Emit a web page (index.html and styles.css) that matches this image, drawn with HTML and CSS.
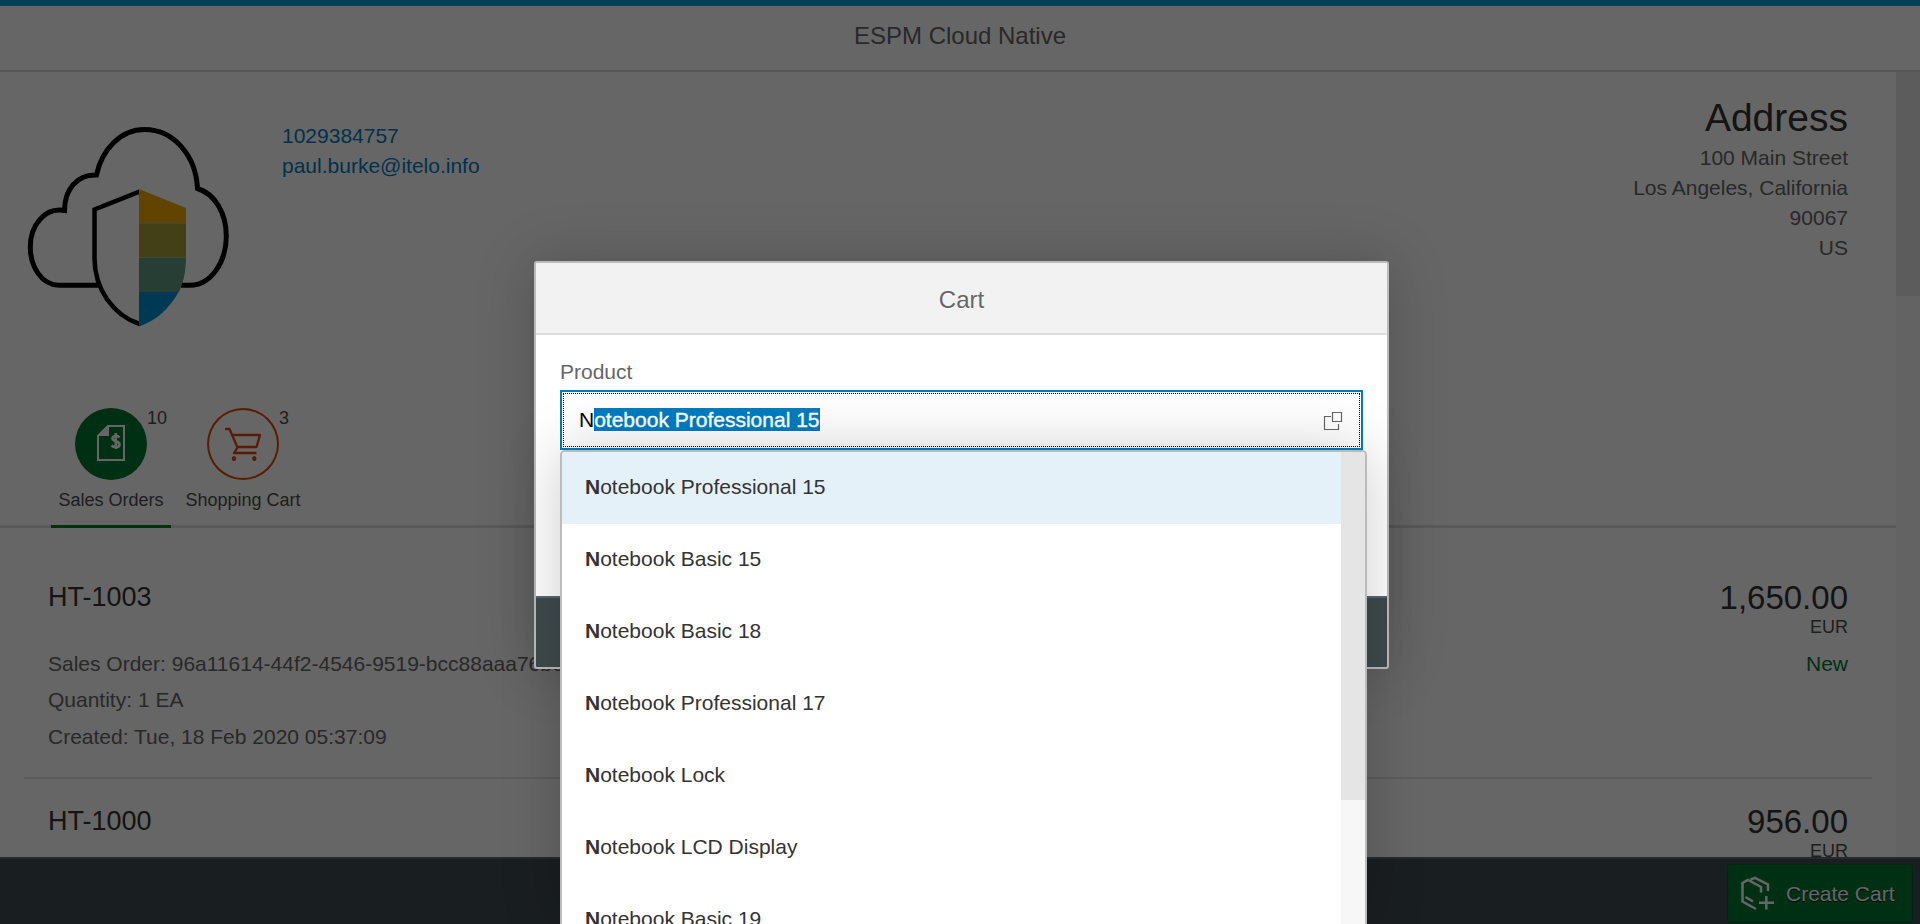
FILE: index.html
```html
<!DOCTYPE html>
<html lang="en">
<head>
<meta charset="utf-8">
<title>ESPM Cloud Native</title>
<link rel="stylesheet" href="styles.css">
</head>
<body>
<div class="app">
  <header class="shell-header"><h1 class="shell-title">ESPM Cloud Native</h1></header>
  <main class="content">
    <div class="page">
      <section class="profile">
        <svg class="logo" width="208" height="210" viewBox="24 128 208 210">
          <path d="M99 285.200H59C42 285.200 30.300 267 30.300 247C30.300 226 44 207 64.500 210.500C64.500 190 77 174 96.500 175C102 149 121 129.500 144.500 129.500C174 129.500 196 156 197.500 188.500C215 194 226.300 213 226.300 236C226.300 262 211 285.200 190 285.200H181" fill="none" stroke="#000" stroke-width="5"/>
          <path d="M139.500 191.700L94.500 209.500V258C94.500 289 113 315 139.500 324" fill="none" stroke="#000" stroke-width="4.500"/>
          <path d="M139 189L186 208V223.300H139Z" fill="#f0ab00"/>
          <path d="M139 223.300H186V257.500H139Z" fill="#a9a13b"/>
          <path d="M139 257.500H186C186 271 183.500 282 179 292H139Z" fill="#5f9c80"/>
          <path d="M139 292H178.500C170 308 156 321 139 326.500Z" fill="#008fd3"/>
        </svg>
        <div class="contact"><a>1029384757</a><a>paul.burke@itelo.info</a></div>
        <div class="address">
          <h2>Address</h2>
          <span>100 Main Street</span><span>Los Angeles, California</span><span>90067</span><span>US</span>
        </div>
      </section>
      <nav class="tabs">
        <div class="tab selected">
          <div class="tab-icon orders">
            <svg width="72" height="72" viewBox="0 0 72 72"><path d="M23 28L33 18H49V52H23Z" fill="none" stroke="#fff" stroke-width="2"/><path d="M22 28L33 17H34V28Z" fill="#fff"/><path d="M44.500 29.500C42.500 27 37.500 27.500 37.500 30.500C37.500 34 44.500 32.500 44.500 36.500C44.500 40 39 40 36.500 37.500M40.800 25V41" fill="none" stroke="#fff" stroke-width="2.600"/></svg>
            <span class="count">10</span>
          </div>
          <span class="tab-label">Sales Orders</span>
        </div>
        <div class="tab">
          <div class="tab-icon cart">
            <svg width="72" height="72" viewBox="0 0 72 72"><path d="M18 21H22.500L30.500 39.500L27 45H49.500M24.500 27H53L49.500 39H30.500" fill="none" stroke="#e04600" stroke-width="2.300" stroke-linejoin="round"/><ellipse cx="27" cy="50.500" rx="2.200" ry="2.600" fill="#e04600"/><ellipse cx="47.300" cy="50.500" rx="2.200" ry="2.600" fill="#e04600"/></svg>
            <span class="count">3</span>
          </div>
          <span class="tab-label">Shopping Cart</span>
        </div>
      </nav>
      <section class="orders-list">
        <article class="order">
          <div class="order-info"><h3>HT-1003</h3><p>Sales Order: 96a11614-44f2-4546-9519-bcc88aaa76be</p><p>Quantity: 1 EA</p><p>Created: Tue, 18 Feb 2020 05:37:09</p></div>
          <div class="order-price"><strong>1,650.00</strong><span class="currency">EUR</span><span class="status">New</span></div>
        </article>
        <article class="order">
          <div class="order-info"><h3>HT-1000</h3></div>
          <div class="order-price"><strong>956.00</strong><span class="currency">EUR</span></div>
        </article>
      </section>
    </div>
    <div class="scrollbar"><div class="scroll-thumb"></div></div>
  </main>
  <footer class="shell-footer">
    <button class="create">
      <svg width="36" height="36" viewBox="0 0 36 36" fill="none" stroke="#fff" stroke-width="2.500"><path d="M16 33L2.500 25.500V7L8 4L21 11V16.500M10.500 3.500L15 1.800L28 8.500V15M5.500 21L13 25.500M26.300 20V33.500M19 26.800H34"/></svg>
      <span>Create Cart</span>
    </button>
  </footer>
</div>
<div class="overlay"></div>
<div class="dialog">
  <div class="dialog-header">Cart</div>
  <div class="dialog-body">
    <label class="field-label">Product</label>
    <div class="input">
      <div class="input-focus">
        <span class="input-value">N<mark>otebook Professional 15</mark></span>
        <svg class="value-help" width="20" height="20" viewBox="0 0 20 20" fill="none" stroke="#666" stroke-width="1.200"><path d="M9.500 1.500H18.500V10.500H9.500ZM8 5.500H1.500V18.500H15.500V13"/></svg>
      </div>
    </div>
  </div>
  <div class="dialog-footer"></div>
</div>
<div class="suggestions">
  <ul class="suggestion-list">
    <li class="active"><b>N</b>otebook Professional 15</li>
    <li><b>N</b>otebook Basic 15</li>
    <li><b>N</b>otebook Basic 18</li>
    <li><b>N</b>otebook Professional 17</li>
    <li><b>N</b>otebook Lock</li>
    <li><b>N</b>otebook LCD Display</li>
    <li><b>N</b>otebook Basic 19</li>
  </ul>
  <div class="suggestion-scroll"><div class="suggestion-thumb"></div></div>
</div>
</body>
</html>
```
FILE: styles.css
```css
* { box-sizing: border-box; }
html { overflow: hidden; }
body { margin: 0; height: 924px; overflow: hidden; position: relative; font-family: "Liberation Sans", Arial, sans-serif; font-size: 21px; color: #666; background: #fff; }
h1, h2, h3, p, ul { margin: 0; padding: 0; font-weight: normal; }
.app { height: 924px; display: flex; flex-direction: column; }
.shell-header { height: 72px; flex: none; border-top: 6px solid #009de0; border-bottom: 2px solid #d9d9d9; display: flex; justify-content: center; }
.shell-title { font-size: 24px; line-height: 60px; }
.content { flex: 1; min-height: 0; display: flex; }
.page { flex: 1; overflow: hidden; }
.scrollbar { width: 24px; background: #f7f7f7; }
.scroll-thumb { height: 224px; background: #e5e5e5; }

.profile { height: 336px; padding: 24px 48px 0 24px; display: flex; }
.logo { margin-top: 32px; flex: none; overflow: visible; }
.contact { margin: 25px 0 0 50px; display: flex; flex-direction: column; line-height: 30px; color: #007cc0; }
.address { margin-left: auto; display: flex; flex-direction: column; text-align: right; line-height: 30px; }
.address h2 { font-size: 39px; line-height: 43px; margin-bottom: 4px; color: #333; }

.tabs { height: 120px; padding-left: 51px; display: flex; gap: 12px; border-bottom: 3px solid #dedede; }
.tab { width: 120px; height: 120px; display: flex; flex-direction: column; align-items: center; }
.tab.selected { border-bottom: 3px solid #007833; }
.tab-icon { width: 72px; height: 72px; border-radius: 50%; position: relative; flex: none; }
.tab-icon.orders { background: #007833; }
.tab-icon.cart { box-shadow: inset 0 0 0 2px #e04600; }
.tab-icon svg { display: block; }
.count { position: absolute; left: 72px; top: 0; font-size: 18px; line-height: 20px; color: #4d4d4d; }
.tab-label { font-size: 18px; line-height: 24px; margin-top: 8px; color: #4d4d4d; white-space: nowrap; }

.orders-list { padding: 27px 24px 0; }
.order { height: 224px; padding: 0 24px; display: flex; justify-content: space-between; border-bottom: 2px solid #e5e5e5; }
.order-info h3 { font-size: 27px; line-height: 31px; margin: 27px 0 39px; color: #333; }
.order-info p { line-height: 24px; margin-bottom: 12px; white-space: nowrap; }
.order-info p:last-child { padding-top: 1px; }
.order-price { display: flex; flex-direction: column; align-items: flex-end; }
.order-price strong { font-size: 33px; font-weight: normal; line-height: 38px; margin-top: 24px; color: #333; }
.currency { font-size: 18px; line-height: 20px; color: #4d4d4d; }
.status { line-height: 24px; margin-top: 15px; color: #007833; }

.shell-footer { height: 67px; flex: none; background: #3f4b53; border-top: 2px solid #5a6b75; display: flex; justify-content: flex-end; padding: 5px 7px 1px; }
.create { width: 186px; height: 59px; padding: 0 0 0 12px; border: 1px solid #006029; border-radius: 3px; background: #007833; color: #fff; font: inherit; display: flex; align-items: center; gap: 10px; text-shadow: 0 1px 1px #000; }

.overlay { position: absolute; inset: 0; background: #000; opacity: .6; }
.dialog { position: absolute; left: 534px; top: 261px; width: 855px; height: 408px; border: 2px solid #bbb; border-radius: 3px; background: #fff; overflow: hidden; box-shadow: 0 0 60px rgba(0,0,0,.2); display: flex; flex-direction: column; }
.dialog-header { height: 72px; flex: none; background: #f2f2f2; border-bottom: 2px solid #ddd; font-size: 24px; line-height: 73px; text-align: center; text-shadow: 0 1px 1px #fff; }
.dialog-body { flex: 1; padding: 24px 24px 0; }
.field-label { display: block; height: 31px; line-height: 25px; }
.input { width: 803px; height: 60px; border: 2px solid #007cc0; padding: 1px; }
.input-focus { height: 54px; border: 1px dotted #000; display: flex; align-items: center; justify-content: space-between; padding: 0 16px 0 15px; }
.input-value { color: #000; display: flex; align-items: center; line-height: 23px; margin-bottom: 2px; }
.input-value mark { background: #007cc0; color: #fff; -webkit-text-stroke: .4px #fff; }
.value-help { position: relative; top: 1px; }
.dialog-footer { height: 71px; flex: none; background: #3f494c; border-top: 2px solid #566873; }

.suggestions { position: absolute; left: 560px; top: 450px; width: 807px; height: 474px; border: 2px solid #bbb; border-bottom: 0; border-radius: 5px 5px 0 0; background: #fff; overflow: hidden; display: flex; box-shadow: 0 0 60px rgba(0,0,0,.2); }
.suggestion-list { flex: 1; list-style: none; color: #333; }
.suggestion-list li { height: 72px; line-height: 69px; padding-left: 23px; }
.suggestion-list .active { background: #e4f1f9; }
.suggestion-scroll { width: 24px; background: #f7f7f7; }
.suggestion-thumb { height: 348px; background: #e5e5e5; }
```
